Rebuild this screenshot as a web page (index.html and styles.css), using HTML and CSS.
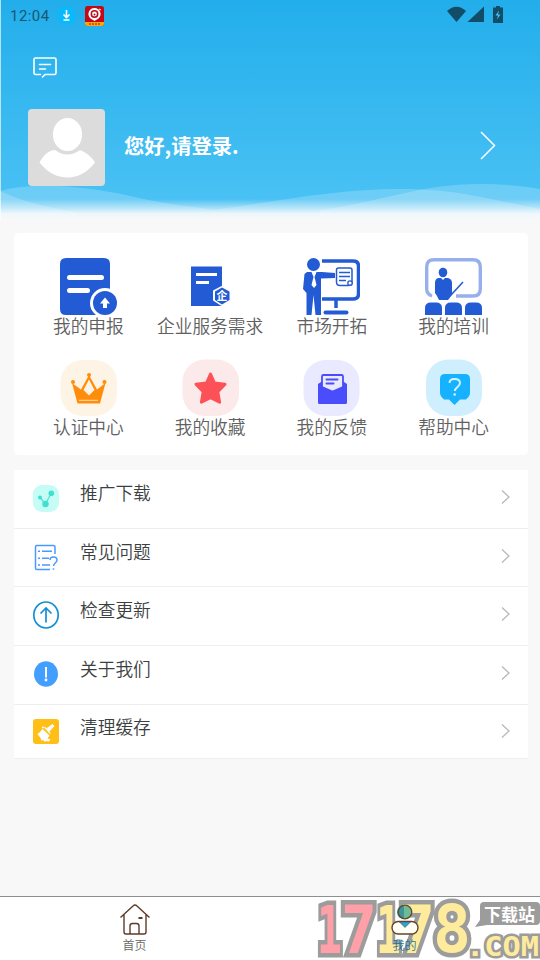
FILE: index.html
```html
<!DOCTYPE html>
<html lang="zh-CN">
<head>
<meta charset="utf-8">
<title>我的</title>
<link rel="stylesheet" href="styles.css">
</head>
<body>
<div class="app">
  <header class="hero">
    <svg class="hero-bg" viewBox="0 0 540 220" aria-hidden="true">
      <defs>
        <linearGradient id="sky" x1="0" y1="0" x2="0" y2="1"><stop offset="0" stop-color="#22aeeb"/><stop offset=".9" stop-color="#49c1f4"/><stop offset="1" stop-color="#49c1f4"/></linearGradient>
        <linearGradient id="mist" x1="0" y1="0" x2="0" y2="1"><stop offset="0" stop-color="#f8fafc" stop-opacity="0"/><stop offset=".45" stop-color="#f8fafc" stop-opacity=".55"/><stop offset=".7" stop-color="#f8fafc" stop-opacity=".92"/><stop offset="1" stop-color="#f8f8f8"/></linearGradient>
      </defs>
      <path fill="url(#sky)" d="M0 0H540V220H0z"/>
      <g fill="#fff" fill-opacity=".2">
        <path d="M0 191C35 181 90 187 130 196S180 205 215 210V220H0z"/>
        <path d="M0 191Q30 205 75 212V220H0z"/>
        <path d="M215 210C290 199 340 189 400 189S490 200 540 209V220H215z"/>
        <path d="M320 210C385 201 420 184 480 184Q515 184 540 189V220H320z"/>
      </g>
      <path fill="url(#mist)" d="M0 199H540V220H0z"/>
      <path fill="#fff" fill-opacity=".65" d="M0 0H1V220H0z"/>
    </svg>
    <div class="status">
      <span class="clock">12:04</span>
      <svg class="dl" width="19" height="19" viewBox="0 0 19 19"><circle cx="9.500" cy="9.500" r="9.300" fill="#08b9fd"/><path d="M9.500 4v7M6.500 8.500l3 3 3-3M6.500 14h6" fill="none" stroke="#fff" stroke-width="1.600"/></svg>
      <svg class="app-ic" width="19" height="20" viewBox="0 0 19 20"><rect width="19" height="20" rx="2.500" fill="#c70715"/><path d="M0 16h19v1.500a2.500 2.500 0 0 1-2.500 2.500h-14A2.500 2.500 0 0 1 0 17.500z" fill="#f7a511"/><path d="M4 18h11" stroke="#d45b0b" stroke-width="2" stroke-dasharray="2 1"/><path d="M9.500 2a6 6 0 0 1 4 10.500L9.500 15l-4-2.500A6 6 0 0 1 9.500 2z" fill="#fff"/><circle cx="9.500" cy="8" r="3.200" fill="none" stroke="#b40d18" stroke-width="1.500"/><circle cx="9.500" cy="8.500" r="1" fill="#b40d18"/><path d="M14 3l2 1" stroke="#fff"/></svg>
      <svg class="signals" width="57" height="18" viewBox="0 0 57 18" fill="#114d66"><path d="M0 5Q9.500-3.500 19 5L9.500 16z"/><path d="M37 .5V16H20.500z"/><path d="M49 0h4v1.500h3V17H46V1.500h3z"/><path d="M52 4.500l-3.500 5h2.500l-1 4 3.500-5H51z" fill="#45c4f7"/></svg>
    </div>
    <svg class="message" width="26" height="24" viewBox="0 0 26 24" fill="none" stroke="#fff" stroke-width="1.600" stroke-linecap="round"><path d="M8.500 18.500H3.500Q2 18.500 2 17V3.500Q2 2 3.500 2h19Q24 2 24 3.500V17Q24 18.500 22.500 18.500h-9.500l-2.500 2.500M7.500 8.500h11M7.500 13h6"/></svg>
    <div class="profile">
      <svg class="avatar" viewBox="0 0 77 77"><rect width="77" height="77" rx="4" fill="#dcdcdc"/><ellipse cx="39.500" cy="25.500" rx="14.600" ry="16.500" fill="#fff"/><path d="M27 41q12.500 9 25 0 10 4 15 12.500C52 73.500 27 73.500 11.500 53.500 16 45 22 41 27 41z" fill="#fff"/></svg>
      <span class="greeting">您好,请登录.</span>
      <svg class="enter" width="18" height="30" viewBox="0 0 18 30"><path d="M2 2l13.500 13.500L2 29" fill="none" stroke="#fff" stroke-width="1.500"/></svg>
    </div>
  </header>

  <main>
    <section class="services">
      <a class="service"><svg viewBox="0 0 57 57"><path d="M6 0h38q6 0 6 6v36L38 57H6q-6 0-6-6V6q0-6 6-6z" fill="#235bd5"/><path d="M9.500 19.500h32M9.500 32.500h18" stroke="#fff" stroke-width="5" stroke-linecap="round"/><circle cx="45" cy="45" r="15" fill="#fff"/><circle cx="45" cy="45" r="12" fill="#235bd5"/><path d="M45 39.500l-5 6h3v4.500h4v-4.500h3z" fill="#fff"/></svg><span>我的申报</span></a>
      <a class="service"><svg viewBox="0 0 57 57"><path d="M9 8.500h31V48H9z" fill="#235bd5"/><path d="M14 16.500h21M14 24.500h13" stroke="#fff" stroke-width="3"/><path d="M39.500 28l8.500 4.500v10L39.500 48 31 42.500v-10z" fill="#fff"/><path d="M40 29.500l7.500 4v8.500L40 46.500 33 42v-8.500z" fill="#235bd5"/><text x="40" y="41.800" text-anchor="middle" class="badge-char">企</text></svg><span>企业服务需求</span></a>
      <a class="service"><svg viewBox="0 0 57 57" fill="#235bd5"><circle cx="10.500" cy="6.500" r="6.500"/><path d="M4 14h15l13 1v5l-14 .5V57h-5.500l-2-20-2 20H3.500V35L0 31l1.500-15z"/><path d="M8.500 14l2 5-2 8 2.500 3 2.500-3-2-8 2-5z" fill="#fff"/><path d="M19 3h31q5.500 0 5.500 5v28q0 5-5.500 5H19" fill="none" stroke="#235bd5" stroke-width="3.500"/><path d="M33 42v8" stroke="#235bd5" stroke-width="3.500"/><path d="M22.500 54.500h21" stroke="#235bd5" stroke-width="4" stroke-linecap="round"/><path d="M33.500 24V12q0-2 2-2h11.500q2 0 2 2v13q0 2.500-4 2.500h-8q-3.500 0-3.500-3.500z" fill="#fff" stroke="#235bd5" stroke-width="1.500"/><path d="M36 14.500h11M36 18.500h11M36 22.500h7" stroke="#235bd5" stroke-width="1.300"/><circle cx="47" cy="25" r="2.200" fill="#fff" stroke="#235bd5" stroke-width="1.300"/></svg><span>市场开拓</span></a>
      <a class="service"><svg viewBox="0 0 57 57" fill="#235bd5"><path d="M7 38Q1.700 36 1.700 31V9q0-7.300 7.300-7.300h39q7.300 0 7.300 7.300v22q0 7-7.300 7H31" fill="none" stroke="#97afea" stroke-width="3.400"/><ellipse cx="18" cy="14.500" rx="4.300" ry="4.800"/><path d="M13 20h3l2 2 2-2h3q4 1 4 5v12l-4 5H14l-2-4-2-3V25q0-4 3-5z"/><path d="M26 37l12-13" stroke="#235bd5" stroke-width="1.600"/><path d="M0 57V50q0-5.500 6-5.500h5q6 0 6 5.500v7zM20 57V50q0-5.500 6-5.500h5q6 0 6 5.500v7zM40 57V50q0-5.500 6-5.500h5q6 0 6 5.500v7z"/></svg><span>我的培训</span></a>
      <a class="service"><svg viewBox="0 0 57 57"><rect x=".5" y="1" width="56.500" height="56" rx="22" fill="#fef4e6"/><path d="M12 24l5.500 20.500h22.500L45.500 24l-8.500 6.500L29 16l-8 14.500z" fill="#ff8d0b"/><path d="M29 20.500L23.500 31 29 36.500 34.500 31z" fill="#fef4e6"/><path d="M19 41.300h19" stroke="#ffdfb7" stroke-width="1"/><g fill="#ff8d0b"><circle cx="13" cy="23" r="2"/><circle cx="29" cy="16" r="2"/><circle cx="44.500" cy="23" r="2"/></g></svg><span>认证中心</span></a>
      <a class="service"><svg viewBox="0 0 57 57"><rect x=".5" y=".5" width="56.500" height="56.500" rx="22" fill="#fce9e9"/><path d="M28.500 15l4 9 10.500 1.200-7.200 7.500 1.800 10.500-9.100-4.500-9.100 4.500 1.800-10.500-7.200-7.500 10.500-1.200z" fill="#fd5158" stroke="#fd5158" stroke-width="3" stroke-linejoin="round"/></svg><span>我的收藏</span></a>
      <a class="service"><svg viewBox="0 0 57 57"><rect x=".5" y="1" width="56" height="56" rx="22" fill="#e9e9ff"/><path d="M15 25l3-2h23l3 2v18.500q0 1.500-1.500 1.500h-26Q15 45 15 43.500z" fill="#494dfb"/><path d="M19 28V17.500Q19 16 20.500 16h18q1.500 0 1.500 1.500V28l-10.500 4.500z" fill="#e9e9ff" stroke="#494dfb" stroke-width="1.800"/><path d="M23.500 20.500h11M23.500 24.500h7" stroke="#494dfb" stroke-width="2" stroke-linecap="round"/></svg><span>我的反馈</span></a>
      <a class="service"><svg viewBox="0 0 57 57"><rect x="1" y=".5" width="56" height="56.500" rx="22" fill="#cfefff"/><path d="M20 15h20q5 0 5 5v14q0 3-4 6.500h-6L29.500 46 24 40.500h-5q-4-3.500-4-6.500V20q0-5 5-5z" fill="#16b2ff"/><path d="M24.500 24q0-4 5-4 5.500 0 5.500 4 0 2-2.500 4t-2.700 4" fill="none" stroke="#d5f4ff" stroke-width="1.900"/><circle cx="29.700" cy="35.500" r="1.300" fill="#d5f4ff"/></svg><span>帮助中心</span></a>
    </section>

    <nav class="menu">
      <a class="row"><svg class="row-icon" viewBox="0 0 28 28"><rect x="1" y="1" width="26" height="27" rx="9" fill="#c5fdf6"/><path d="M8 13.500l5.500 6.500L19 9.500" fill="none" stroke="#55e4d4" stroke-width="1.300"/><g fill="#3fe0cf"><circle cx="8" cy="13.500" r="2"/><circle cx="13.500" cy="20" r="3.200"/><circle cx="19.300" cy="9.200" r="2.800"/></g></svg><span>推广下载</span><svg class="chevron" viewBox="0 0 10 16"><path d="M1 1.500L8 8l-7 6.500"/></svg></a>
      <a class="row"><svg class="row-icon" viewBox="0 0 28 28" fill="none" stroke="#4999ff" stroke-width="1.500"><path d="M23 11V4q0-1.500-1.500-1.500H5Q3.500 2.500 3.500 4v21q0 1.500 1.500 1.500h13"/><path d="M6 8.200h2M10 8.200h10M6 15.200h2M10 15.200h7M6 22h2M10 22h8"/><path d="M18 17q0-3 3.500-3t3.500 3q0 1.500-1.700 3T21.500 23"/><path d="M20.700 26h1.500"/></svg><span>常见问题</span><svg class="chevron" viewBox="0 0 10 16"><path d="M1 1.500L8 8l-7 6.500"/></svg></a>
      <a class="row"><svg class="row-icon" viewBox="0 0 28 28" fill="none" stroke="#128fd7" stroke-width="1.700"><ellipse cx="14" cy="14" rx="12.200" ry="13"/><path d="M14 21.500V7M8.500 12.500L14 7l5.500 5.500"/></svg><span>检查更新</span><svg class="chevron" viewBox="0 0 10 16"><path d="M1 1.500L8 8l-7 6.500"/></svg></a>
      <a class="row"><svg class="row-icon" viewBox="0 0 28 28"><ellipse cx="14" cy="14" rx="12" ry="12.700" fill="#439fff"/><path d="M14 7v10.500" stroke="#fff" stroke-width="2"/><circle cx="14" cy="20" r="1.400" fill="#fff"/></svg><span>关于我们</span><svg class="chevron" viewBox="0 0 10 16"><path d="M1 1.500L8 8l-7 6.500"/></svg></a>
      <a class="row"><svg class="row-icon" viewBox="0 0 28 28"><rect x="1" y="1" width="26" height="25" rx="3" fill="#ffbf17"/><path d="M20.500 6.500l1.500 1.500-5 5.500 1 2-5.500-6 2.500 1z" fill="#fff" stroke="#fff"/><path d="M10.500 11l7 6.500-2 3 3 1-1.500 2-3-.5-1 1-2-2-1.500.5-1-2.500-3-4L8 14z" fill="#fff"/><circle cx="11" cy="9.500" r="1" fill="#fff"/></svg><span>清理缓存</span><svg class="chevron" viewBox="0 0 10 16"><path d="M1 1.500L8 8l-7 6.500"/></svg></a>
    </nav>
  </main>

  <footer class="tabs">
    <svg class="watermark" viewBox="0 0 240 63">
      <g class="digits">
        <text x="17" y="56" textLength="25" lengthAdjust="spacingAndGlyphs" fill="#ffa0a8">1</text>
        <text x="41" y="56" textLength="36" lengthAdjust="spacingAndGlyphs" fill="#ffa0a8">7</text>
        <text x="76" y="56" textLength="25" lengthAdjust="spacingAndGlyphs" fill="#ffeb9c">1</text>
        <text x="99" y="56" textLength="36" lengthAdjust="spacingAndGlyphs" fill="#ffeb9c">7</text>
        <text x="133" y="55" textLength="38" lengthAdjust="spacingAndGlyphs" fill="#ffeb9c">8</text>
      </g>
      <path d="M184 5h52q4 0 4 4v15q0 4-4 4h-49l-12 2 5-7V9q0-4 4-4z" fill="#9c9c9c"/>
      <text class="site" x="184" y="23.500" textLength="51" lengthAdjust="spacingAndGlyphs">下载站</text>
      <text class="com" x="166" y="59" textLength="73" lengthAdjust="spacingAndGlyphs">.COM</text>
    </svg>
    <a class="tab"><svg viewBox="0 0 32 34" fill="none" stroke="#5d3b2a" stroke-width="1.400"><path d="M1.500 14.500L14 3q2-2 4 0l12.500 11.500M5 11.500V29q0 2 2 2h18q2 0 2-2V11.500M11 31V23q0-2.500 2.500-2.500h4Q20 20.500 20 23v8"/><path d="M19.500 15h4" stroke-width="2"/></svg><span>首页</span></a>
    <a class="tab active"><svg viewBox="0 0 32 34"><circle cx="16" cy="9" r="6.800" fill="#72ba94"/><path d="M15 2a7 7 0 0 0 0 14z" fill="#3c969a"/><circle cx="16" cy="9" r="6.800" fill="none" stroke="#594d2b" stroke-width="1.300"/><rect x="3" y="18.500" width="26" height="12.500" rx="6.200" fill="#fffef6" stroke="#654426" stroke-width="1.400"/><path d="M10.500 19h11L16 24.500z" fill="#20a8e5" stroke="#654426" stroke-width=".6"/></svg><span>我的</span></a>
  </footer>
</div>
</body>
</html>
```
FILE: styles.css
```css
* { box-sizing: border-box; }
body {
  margin: 0;
  background: #f8f8f8;
  font-family: "Noto Sans CJK SC", sans-serif;
  font-weight: 350;
}
svg { display: block; flex: none; }
.app {
  height: 960px;
  display: flex;
  flex-direction: column;
  overflow: hidden;
}
.hero {
  position: relative;
  height: 220px;
  flex: none;
}
.hero-bg {
  position: absolute;
  inset: 0;
  width: 540px;
  height: 220px;
}
.status {
  position: relative;
  height: 31px;
  padding: 0 36px 0 10px;
  display: flex;
  align-items: center;
}
.clock {
  width: 47px;
  color: #175873;
  font: 400 15px/20px Roboto, sans-serif;
  letter-spacing: .45px;
}
.app-ic { margin-left: 9px; }
.signals { margin: -2px 0 0 auto; }
.message {
  position: relative;
  margin: 25px 0 0 32px;
}
.profile {
  position: relative;
  display: flex;
  align-items: center;
  height: 77px;
  margin: 29px 43px 0 28px;
}
.avatar { width: 77px; height: 77px; }
.greeting {
  margin: -6px 0 0 19px;
  color: #fff;
  font-size: 20.3px;
  font-weight: 700;
  white-space: nowrap;
}
.enter { margin: -6px 0 0 auto; }
.services {
  display: grid;
  grid-template-columns: repeat(4, 1fr);
  grid-auto-rows: 101px;
  height: 222px;
  margin: 13px 12px 0 14px;
  padding: 25px 13.500px 0;
  background: #fff;
  border-radius: 5px;
}
.service {
  display: flex;
  flex-direction: column;
  align-items: center;
  color: #606060;
  font-size: 17.700px;
  line-height: 20px;
  white-space: nowrap;
}
.service svg { width: 57px; height: 57px; }
.badge-char { fill: #fff; font-size: 11px; font-weight: 700; }
.menu {
  margin: 15px 12px 0 14px;
  background: #fff;
}
.row {
  display: flex;
  height: 58.700px;
  padding: 14px 17px 0 18px;
  border-bottom: 1px solid #eee;
  color: #3c3f42;
  font-size: 17.700px;
  line-height: 16px;
}
.row:last-child { height: 54px; padding-top: 13px; }
.row-icon { width: 28px; height: 28px; }
.row span { margin-left: 20px; }
.chevron {
  width: 10px;
  height: 16px;
  margin: 5px 0 0 auto;
  fill: none;
  stroke: #b9b9b9;
  stroke-width: 1.3;
}
.tabs {
  position: relative;
  display: flex;
  height: 64px;
  margin-top: auto;
  flex: none;
  border-top: 1px solid #8f8f8f;
  background: #fff;
}
.tab {
  position: relative;
  flex: 1;
  display: flex;
  flex-direction: column;
  align-items: center;
  padding: 6px 1px 0 0;
  color: #666;
  font-size: 12px;
  line-height: 16px;
}
.tab svg { width: 32px; height: 34px; }
.active { color: #1f7398; }
.watermark {
  position: absolute;
  left: 300px;
  top: 0;
  width: 240px;
  height: 63px;
}
.watermark text {
  font-weight: 700;
  paint-order: stroke;
  stroke: #9c9c9c;
  stroke-linejoin: miter;
}
.digits text {
  font-family: "DejaVu Sans Mono", monospace;
  font-size: 65px;
  stroke-width: 9px;
}
.watermark .site { fill: #fff; font-size: 17px; stroke: none; }
.watermark .com {
  font-family: "DejaVu Sans Mono", monospace;
  font-size: 27px;
  fill: #ffeb9c;
  stroke-width: 5px;
}
```
